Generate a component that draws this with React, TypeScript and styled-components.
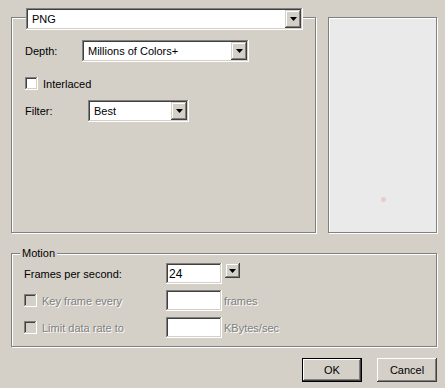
import React from "react";
import styled, { createGlobalStyle } from "styled-components";

const Global = createGlobalStyle`
  html, body { margin: 0; padding: 0; background: #d4d0c8; }
  body { font-family: "Liberation Sans", Arial, sans-serif; font-size: 11px; color: #000; }
  * { box-sizing: border-box; }
`;

const Dialog = styled.div`
  width: 445px;
  height: 388px;
  padding: 17px 8px 0 11px;
  display: flex;
  flex-direction: column;
  background: #d4d0c8;
`;

const TopRow = styled.div`
  display: flex;
  gap: 12px;
`;

const Etched = styled.div`
  position: relative;
  border: 1px solid #808080;
  box-shadow: inset 1px 1px 0 #fff, 1px 1px 0 #fff;
`;

const OptionsGroup = styled(Etched)`
  width: 305px;
  height: 216px;
  padding: 22px 0 0 13px;
  display: flex;
  flex-direction: column;
`;

const Preview = styled(Etched)`
  width: 109px;
  height: 216px;
  background: #eaeaea;
  padding: 179px 0 0 52px;
`;

const Dot = styled.div`
  width: 5px;
  height: 5px;
  border-radius: 50%;
  background: #e6cfca;
`;

const FormatCombo = styled.div`
  position: absolute;
  top: -10px;
  left: 14px;
`;

const Field = styled.div<{ $w: number; $h?: number }>`
  width: ${(p) => p.$w}px;
  height: ${(p) => p.$h ?? 22}px;
  background: #fff;
  box-shadow: inset -1px -1px #fff, inset 1px 1px #808080, inset -2px -2px #d4d0c8, inset 2px 2px #404040;
  display: flex;
  align-items: center;
  padding: 0 2px 0 6px;
`;

const ComboText = styled.span`
  flex: 1;
  white-space: nowrap;
  overflow: hidden;
`;

const ArrowBtn = styled.div<{ $size?: number }>`
  width: ${(p) => p.$size ?? 16}px;
  height: ${(p) => p.$size ?? 18}px;
  background: #d4d0c8;
  box-shadow: inset -1px -1px #404040, inset 1px 1px #d4d0c8, inset -2px -2px #808080, inset 2px 2px #fff;
  display: flex;
  align-items: center;
  justify-content: center;
  flex: none;
`;

const Arrow = () => (
  <svg width="7" height="4" viewBox="0 0 7 4">
    <polygon points="0,0 7,0 3.5,4" fill="#000" />
  </svg>
);

const Row = styled.div<{ $mt?: number }>`
  display: flex;
  align-items: center;
  margin-top: ${(p) => p.$mt ?? 0}px;
`;

const Label = styled.span<{ $w?: number; $disabled?: boolean }>`
  width: ${(p) => (p.$w ? `${p.$w}px` : "auto")};
  flex: none;
  white-space: nowrap;
  color: ${(p) => (p.$disabled ? "#808080" : "#000")};
  text-shadow: ${(p) => (p.$disabled ? "1px 1px 0 #fff" : "none")};
`;

const Check = styled.div<{ $disabled?: boolean }>`
  width: 13px;
  height: 13px;
  flex: none;
  background: ${(p) => (p.$disabled ? "#d4d0c8" : "#fff")};
  box-shadow: inset -1px -1px #fff, inset 1px 1px #808080, inset -2px -2px #d4d0c8, inset 2px 2px #404040;
  margin-right: 5px;
`;

const MotionGroup = styled(Etched)`
  margin-top: 20px;
  width: 426px;
  height: 94px;
  padding: 9px 0 0 12px;
  display: flex;
  flex-direction: column;
  gap: 6px;
`;

const Legend = styled.span`
  position: absolute;
  top: -8px;
  left: 8px;
  padding: 0 2px;
  background: #d4d0c8;
  line-height: 14px;
`;

const Input = styled.div<{ $w: number }>`
  width: ${(p) => p.$w}px;
  height: 21px;
  background: #fff;
  box-shadow: inset -1px -1px #fff, inset 1px 1px #808080, inset -2px -2px #d4d0c8, inset 2px 2px #404040;
  display: flex;
  align-items: center;
  padding-left: 3px;
  font-size: 12px;
  flex: none;
`;

const Unit = styled.span`
  margin-left: 2px;
  color: #808080;
  text-shadow: 1px 1px 0 #fff;
`;

const SpinBtn = styled(ArrowBtn)`
  margin-left: 3px;
  align-self: flex-start;
`;

const ButtonRow = styled.div`
  margin-top: 11px;
  display: flex;
  justify-content: flex-end;
  gap: 15px;
`;

const Button = styled.button<{ $default?: boolean }>`
  width: 60px;
  height: 24px;
  font-family: inherit;
  font-size: 11px;
  color: #000;
  background: #d4d0c8;
  border: ${(p) => (p.$default ? "1px solid #000" : "none")};
  padding: 0;
  box-shadow: inset -1px -1px #404040, inset 1px 1px #fff, inset -2px -2px #808080, inset 2px 2px #d4d0c8;
`;

export default function App() {
  return (
    <>
      <Global />
      <Dialog>
        <TopRow>
          <OptionsGroup>
            <FormatCombo>
              <Field $w={277} $h={22}>
                <ComboText>PNG</ComboText>
                <ArrowBtn>
                  <Arrow />
                </ArrowBtn>
              </Field>
            </FormatCombo>
            <Row>
              <Label $w={57}>Depth:</Label>
              <Field $w={167}>
                <ComboText>Millions of Colors+</ComboText>
                <ArrowBtn>
                  <Arrow />
                </ArrowBtn>
              </Field>
            </Row>
            <Row $mt={15}>
              <Check />
              <Label>Interlaced</Label>
            </Row>
            <Row $mt={10}>
              <Label $w={63}>Filter:</Label>
              <Field $w={101}>
                <ComboText>Best</ComboText>
                <ArrowBtn>
                  <Arrow />
                </ArrowBtn>
              </Field>
            </Row>
          </OptionsGroup>
          <Preview>
            <Dot />
          </Preview>
        </TopRow>
        <MotionGroup>
          <Legend>Motion</Legend>
          <Row>
            <Label $w={142}>Frames per second:</Label>
            <Input $w={56}>24</Input>
            <SpinBtn $size={15}>
              <Arrow />
            </SpinBtn>
          </Row>
          <Row>
            <Check $disabled />
            <Label $w={124} $disabled>
              Key frame every
            </Label>
            <Input $w={56} />
            <Unit>frames</Unit>
          </Row>
          <Row>
            <Check $disabled />
            <Label $w={124} $disabled>
              Limit data rate to
            </Label>
            <Input $w={56} />
            <Unit>KBytes/sec</Unit>
          </Row>
        </MotionGroup>
        <ButtonRow>
          <Button $default>OK</Button>
          <Button>Cancel</Button>
        </ButtonRow>
      </Dialog>
    </>
  );
}
